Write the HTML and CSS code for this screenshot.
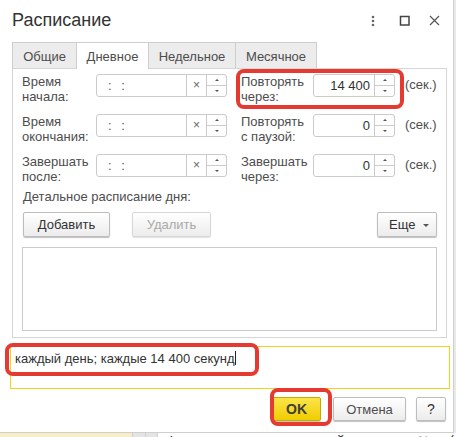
FILE: index.html
```html
<!DOCTYPE html>
<html lang="ru">
<head>
<meta charset="utf-8">
<title>Расписание</title>
<link rel="stylesheet" href="styles.css">
</head>
<body>
<div class="screen">
  <div class="dialog">
    <div class="header">
      <div class="title">Расписание</div>
      <svg class="hicons" width="90" height="42" viewBox="364 0 90 42">
        <circle cx="374" cy="17" r="1.3" fill="#666"/>
        <circle cx="374" cy="21" r="1.3" fill="#666"/>
        <circle cx="374" cy="25" r="1.3" fill="#666"/>
        <rect x="401.5" y="16.5" width="8.5" height="8.5" fill="none" stroke="#444" stroke-width="1.5"/>
        <path d="M431 16 L440 25 M440 16 L431 25" stroke="#555" stroke-width="1.2" fill="none"/>
      </svg>
    </div>

    <div class="tabs">
      <div class="tab t1">Общие</div>
      <div class="tab t2 active">Дневное</div>
      <div class="tab t3">Недельное</div>
      <div class="tab t4">Месячное</div>
    </div>

    <div class="panel">
      <div class="row">
        <div class="label">Время<br>начала:</div>
        <div class="field time">
          <div class="value"><span>: :</span></div>
          <div class="clear">×</div>
          <div class="spin"><div class="up"><i></i></div><div class="down"><i></i></div></div>
        </div>
        <div class="label rlabel">Повторять<br>через:</div>
        <div class="field num">
          <div class="value">14 400</div>
          <div class="spin"><div class="up"><i></i></div><div class="down"><i></i></div></div>
        </div>
        <div class="sec">(сек.)</div>
      </div>

      <div class="row">
        <div class="label">Время<br>окончания:</div>
        <div class="field time">
          <div class="value"><span>: :</span></div>
          <div class="clear">×</div>
          <div class="spin"><div class="up"><i></i></div><div class="down"><i></i></div></div>
        </div>
        <div class="label rlabel">Повторять<br>с паузой:</div>
        <div class="field num">
          <div class="value">0</div>
          <div class="spin"><div class="up"><i></i></div><div class="down"><i></i></div></div>
        </div>
        <div class="sec">(сек.)</div>
      </div>

      <div class="row">
        <div class="label">Завершать<br>после:</div>
        <div class="field time">
          <div class="value"><span>: :</span></div>
          <div class="clear">×</div>
          <div class="spin"><div class="up"><i></i></div><div class="down"><i></i></div></div>
        </div>
        <div class="label rlabel">Завершать<br>через:</div>
        <div class="field num">
          <div class="value">0</div>
          <div class="spin"><div class="up"><i></i></div><div class="down"><i></i></div></div>
        </div>
        <div class="sec">(сек.)</div>
      </div>

      <div class="detail">Детальное расписание дня:</div>
      <div class="toolbar">
        <button class="btn add">Добавить</button>
        <button class="btn del" disabled>Удалить</button>
        <button class="btn more">Еще <i class="caret"></i></button>
      </div>
      <div class="list"></div>
    </div>

    <div class="status">каждый день; каждые 14 400 секунд<span class="cursor"></span></div>

    <div class="footer">
      <button class="btn ok">OK</button>
      <button class="btn cancel">Отмена</button>
      <button class="btn help">?</button>
    </div>

    <div class="mark mark-repeat"></div>
    <div class="mark mark-status"></div>
    <div class="mark mark-ok"></div>
  </div>

  <div class="behind">
    <div class="bcell yellow"></div>
    <div class="bcell gray1"></div>
    <div class="bcell gray2"></div>
    <div class="btext">Фоновая выгрузка: настройка запроса №&nbsp;&nbsp;&nbsp;&nbsp;(</div>
  </div>
</div>
</body>
</html>
```

FILE: styles.css
```css
* { box-sizing: border-box; }

html, body {
  margin: 0;
  padding: 0;
}

body {
  width: 456px;
  height: 437px;
  overflow: hidden;
  background: #e9e9e9;
  font-family: Arial, "Liberation Sans", sans-serif;
  font-size: 13px;
  color: #4d4d4d;
}

.screen {
  width: 456px;
  height: 437px;
  position: relative;
  overflow: hidden;
}

.dialog {
  position: relative;
  width: 454px;
  height: 433px;
  background: #fff;
  border-right: 1px solid #cfcfcf;
  border-bottom: 1px solid #cfcfcf;
}

.header {
  height: 42px;
  display: flex;
  justify-content: space-between;
}

.title {
  padding: 10px 0 0 12px;
  font-size: 18px;
  line-height: 21px;
  color: #333;
}

.hicons {
  display: block;
}

.tabs {
  display: flex;
  margin-left: 12px;
  height: 26px;
}

.tab {
  height: 27px;
  border: 1px solid #cdcdcd;
  border-bottom: none;
  background: #ececec;
  text-align: center;
  padding-top: 6px;
  line-height: 15px;
  color: #4d4d4d;
  margin-right: -1px;
}

.tab.active {
  background: #fff;
  position: relative;
  z-index: 2;
  height: 27px;
}

.t1 { width: 65px; }
.t2 { width: 73px; }
.t3 { width: 88px; }
.t4 { width: 82px; }

.panel {
  margin-left: 12px;
  width: 435px;
  height: 270px;
  border: 1px solid #d6d6d6;
  padding: 5px 9px 0 9px;
  position: relative;
  z-index: 1;
}

.row {
  display: flex;
  height: 22px;
  margin-bottom: 18px;
  align-items: flex-start;
}

.label {
  width: 74px;
  line-height: 15px;
  white-space: nowrap;
  color: #4d4d4d;
}

.rlabel {
  width: 72px;
  margin-left: 14px;
}

.field {
  display: flex;
  height: 23px;
  border: 1px solid #cbcbcb;
  border-radius: 3px;
  background: #fff;
}

.field.time { width: 131px; }
.field.num { width: 82px; }

.value {
  flex: 1;
  line-height: 21px;
  color: #4d4d4d;
}

.time .value {
  padding-left: 11px;
}

.time .value span {
  word-spacing: 6px;
}

.num .value {
  text-align: right;
  padding-right: 4px;
  color: #333;
}

.clear {
  width: 20px;
  border-left: 1px solid #cbcbcb;
  text-align: center;
  line-height: 20px;
  font-size: 12px;
  color: #666;
}

.spin {
  width: 20px;
  border-left: 1px solid #cbcbcb;
  display: flex;
  flex-direction: column;
}

.spin .up, .spin .down {
  flex: 1;
  display: flex;
  align-items: center;
  justify-content: center;
}

.spin .up {
  border-bottom: 1px solid #cbcbcb;
}

.spin .up i {
  width: 0;
  height: 0;
  border-left: 2px solid transparent;
  border-right: 2px solid transparent;
  border-bottom: 2px solid #555;
}

.spin .down i {
  width: 0;
  height: 0;
  border-left: 2px solid transparent;
  border-right: 2px solid transparent;
  border-top: 2px solid #555;
}

.sec {
  margin-left: 10px;
  line-height: 22px;
  color: #4d4d4d;
}

.detail {
  margin-top: -5px;
  line-height: 15px;
  padding-left: 1px;
}

.toolbar {
  display: flex;
  margin-top: 8px;
  height: 25px;
}

.btn {
  font-family: Arial, "Liberation Sans", sans-serif;
  font-size: 13px;
  color: #333;
  height: 25px;
  padding: 0;
  border: 1px solid #bdbdbd;
  border-radius: 2px;
  background: linear-gradient(#ffffff, #ececec);
  box-shadow: 0 1px 1px rgba(0,0,0,0.25);
  line-height: 22px;
  text-align: center;
}

.add { width: 87px; margin-left: 1px; }
.del { width: 79px; margin-left: 22px; color: #a9a9a9; border-color: #d6d6d6; box-shadow: 0 1px 1px rgba(0,0,0,0.12); }
.more {
  width: 60px;
  margin-left: auto;
  margin-right: 0;
  padding-left: 4px;
}

.caret {
  display: inline-block;
  width: 0;
  height: 0;
  border-left: 3px solid transparent;
  border-right: 3px solid transparent;
  border-top: 3px solid #555;
  vertical-align: middle;
  margin-left: 4px;
}

.list {
  margin-top: 10px;
  height: 84px;
  border: 1px solid #cbcbcb;
  margin-left: 0;
  width: 415px;
}

.status {
  margin: 8px 0 0 10px;
  width: 440px;
  height: 43px;
  border: 1px solid #f3d21e;
  padding: 4px 0 0 4px;
  line-height: 15px;
  color: #333;
}

.cursor {
  display: inline-block;
  width: 1px;
  height: 14px;
  background: #222;
  vertical-align: -2px;
}

.footer {
  display: flex;
  justify-content: flex-end;
  padding-right: 7px;
  margin-top: 8px;
}

.footer .btn { height: 24px; line-height: 21px; }

.ok {
  width: 49px;
  background: linear-gradient(#fbe44a, #f0cd00);
  border-color: #c9aa00;
  font-weight: bold;
  font-size: 14px;
  color: #3d3d3d;
}

.cancel { width: 73px; margin-left: 12px; color: #4d4d4d; }
.help { width: 30px; margin-left: 10px; font-size: 14px; }

.mark {
  position: absolute;
  border: 4px solid #e53a32;
  border-radius: 8px;
}

.mark-repeat { left: 236px; top: 69px; width: 168px; height: 40px; }
.mark-status { left: 5px; top: 343px; width: 254px; height: 33px; }
.mark-ok { left: 270px; top: 388px; width: 62px; height: 38px; }

.behind {
  display: flex;
  height: 4px;
  background: #fff;
  overflow: hidden;
}

.bcell { height: 4px; }
.yellow { width: 133px; background: #f5eec6; border-right: 1px solid #cfcfcf; }
.gray1 { width: 13px; background: #e4e4e4; border-right: 1px solid #cfcfcf; }
.gray2 { width: 12px; background: #e4e4e4; border-right: 1px solid #cfcfcf; }

.btext {
  margin-left: 8px;
  font-size: 14px;
  line-height: 16px;
  margin-top: 0;
  color: #333;
  white-space: nowrap;
}
```
